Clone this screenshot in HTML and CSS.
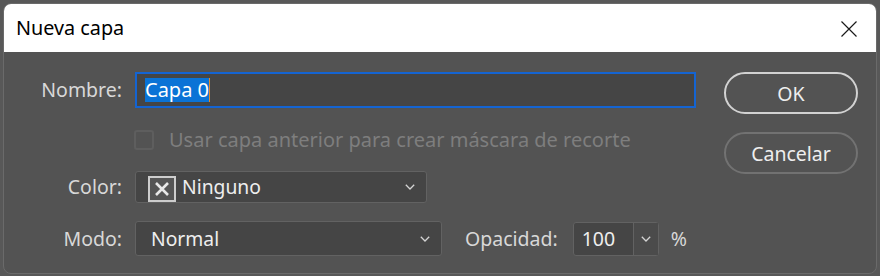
FILE: index.html
```html
<!DOCTYPE html>
<html lang="es">
<head>
    <meta charset="UTF-8">
    <title>Nueva capa</title>
    <link rel="stylesheet" href="styles.css">
</head>
<body>
    <div class="window">
        <div class="titlebar">
            <span class="title">Nueva capa</span>
            <svg class="close" width="16" height="16" viewBox="0 0 16 16">
                <path d="M0.5 0.5L15.5 15.5M15.5 0.5L0.5 15.5" stroke="#1a1a1a" stroke-width="1.2" fill="none"/>
            </svg>
        </div>
        <div class="dialog">
            <div class="form">
                <div class="row row-name">
                    <label class="label">Nombre:</label>
                    <div class="text-input"><span class="selected">Capa 0</span><span class="caret"></span></div>
                </div>
                <div class="row row-check">
                    <span class="checkbox"></span>
                    <span class="check-label">Usar capa anterior para crear máscara de recorte</span>
                </div>
                <div class="row row-color">
                    <label class="label">Color:</label>
                    <div class="select select-color">
                        <span class="swatch">
                            <svg width="18" height="18" viewBox="0 0 18 18">
                                <path d="M3 3L15 15M15 3L3 15" stroke="#e8e8e8" stroke-width="2.6" fill="none"/>
                            </svg>
                        </span>
                        <span class="value">Ninguno</span>
                        <svg class="chevron" width="10" height="6" viewBox="0 0 10 6"><path d="M0.8 0.8L5 5L9.2 0.8" stroke="#d4d4d4" stroke-width="1.3" fill="none"/></svg>
                    </div>
                </div>
                <div class="row row-mode">
                    <label class="label">Modo:</label>
                    <div class="select select-mode">
                        <span class="value">Normal</span>
                        <svg class="chevron" width="10" height="6" viewBox="0 0 10 6"><path d="M0.8 0.8L5 5L9.2 0.8" stroke="#d4d4d4" stroke-width="1.3" fill="none"/></svg>
                    </div>
                    <label class="label-opacity">Opacidad:</label>
                    <div class="spin">
                        <span class="spin-value">100</span>
                        <span class="spin-btn">
                            <svg width="10" height="6" viewBox="0 0 10 6"><path d="M0.8 0.8L5 5L9.2 0.8" stroke="#d4d4d4" stroke-width="1.3" fill="none"/></svg>
                        </span>
                    </div>
                    <span class="percent">%</span>
                </div>
            </div>
            <div class="buttons">
                <button class="btn btn-ok">OK</button>
                <button class="btn btn-cancel">Cancelar</button>
            </div>
        </div>
    </div>
</body>
</html>
```

FILE: styles.css
```css
*{
    margin: 0;
    padding: 0;
    box-sizing: border-box;
}
body{
    background-color: #585858;
    font-family: "Noto Sans", "Open Sans", sans-serif;
    width: 880px;
    height: 276px;
    overflow: hidden;
    line-height: 1.2;
}
.window{
    margin: 3px 3px 0 3px;
    width: 874px;
    height: 271px;
    border: 1px solid #6a6a6a;
    border-radius: 8px;
    background-color: #535353;
    overflow: hidden;
    display: flex;
    flex-direction: column;
}
.titlebar{
    height: 48px;
    background-color: #fff;
    display: flex;
    align-items: center;
    justify-content: space-between;
    padding: 0 19px 0 12px;
}
.title{
    font-size: 19.8px;
    color: #000;
}
.close{
    display: block;
    margin-top: 2px;
}
.dialog{
    flex: 1;
    display: flex;
    padding-top: 20px;
}
.form{
    display: flex;
    flex-direction: column;
}
.row{
    display: flex;
    align-items: center;
}
.label{
    width: 118px;
    text-align: right;
    margin-right: 13px;
    font-size: 19.5px;
    color: #d8d8d8;
}
.text-input{
    width: 561px;
    height: 36px;
    border: 2px solid #1464d2;
    background-color: #454545;
    display: flex;
    align-items: center;
    padding-left: 8px;
}
.selected{
    background-color: #0a73d6;
    color: #fff;
    font-size: 20px;
    line-height: 24px;
}
.caret{
    width: 1px;
    height: 24px;
    background-color: #e08a2c;
}
.row-check{
    margin-top: 21px;
    height: 22px;
    padding-left: 130px;
}
.checkbox{
    width: 20px;
    height: 20px;
    border: 2px solid #5e5e5e;
    border-radius: 3px;
    margin-right: 15px;
}
.check-label{
    font-size: 20px;
    color: #7e7e7e;
}
.row-color{
    margin-top: 20px;
}
.select{
    height: 32px;
    border: 1px solid #626262;
    border-radius: 3px;
    background-color: #454545;
    display: flex;
    align-items: center;
    color: #eeeeee;
    font-size: 19.3px;
}
.select-color{
    width: 292px;
    padding: 0 11px 0 12px;
}
.swatch{
    width: 28px;
    height: 26px;
    border: 2px solid #cdcdcd;
    background-color: #555;
    display: flex;
    align-items: center;
    justify-content: center;
    margin: 4px 6px 0 0;
}
.swatch svg{
    display: block;
}
.value{
    flex: 1;
}
.chevron{
    display: block;
}
.row-mode{
    margin-top: 18px;
}
.select-mode{
    width: 307px;
    height: 35px;
    padding: 0 11px 0 15px;
}
.label-opacity{
    margin-left: 23px;
    margin-right: 15px;
    font-size: 19.5px;
    color: #d8d8d8;
}
.spin{
    width: 86px;
    height: 34px;
    border: 1px solid #626262;
    border-radius: 3px;
    background-color: #454545;
    display: flex;
}
.spin-value{
    flex: 1;
    display: flex;
    align-items: center;
    padding-left: 8px;
    color: #eeeeee;
    font-size: 19.5px;
}
.spin-btn{
    width: 25px;
    border-left: 1px solid #626262;
    background-color: #4b4b4b;
    display: flex;
    align-items: center;
    justify-content: center;
}
.percent{
    margin-left: 12px;
    font-size: 19.5px;
    color: #d8d8d8;
}
.buttons{
    margin-left: 28px;
    display: flex;
    flex-direction: column;
    gap: 18px;
}
.btn{
    width: 134px;
    height: 42px;
    border-radius: 21px;
    background-color: transparent;
    font-family: "Noto Sans", sans-serif;
    font-size: 19.5px;
    color: #eeeeee;
}
.btn-ok{
    border: 2px solid #d2d2d2;
}
.btn-cancel{
    border: 2px solid #727272;
}
```
